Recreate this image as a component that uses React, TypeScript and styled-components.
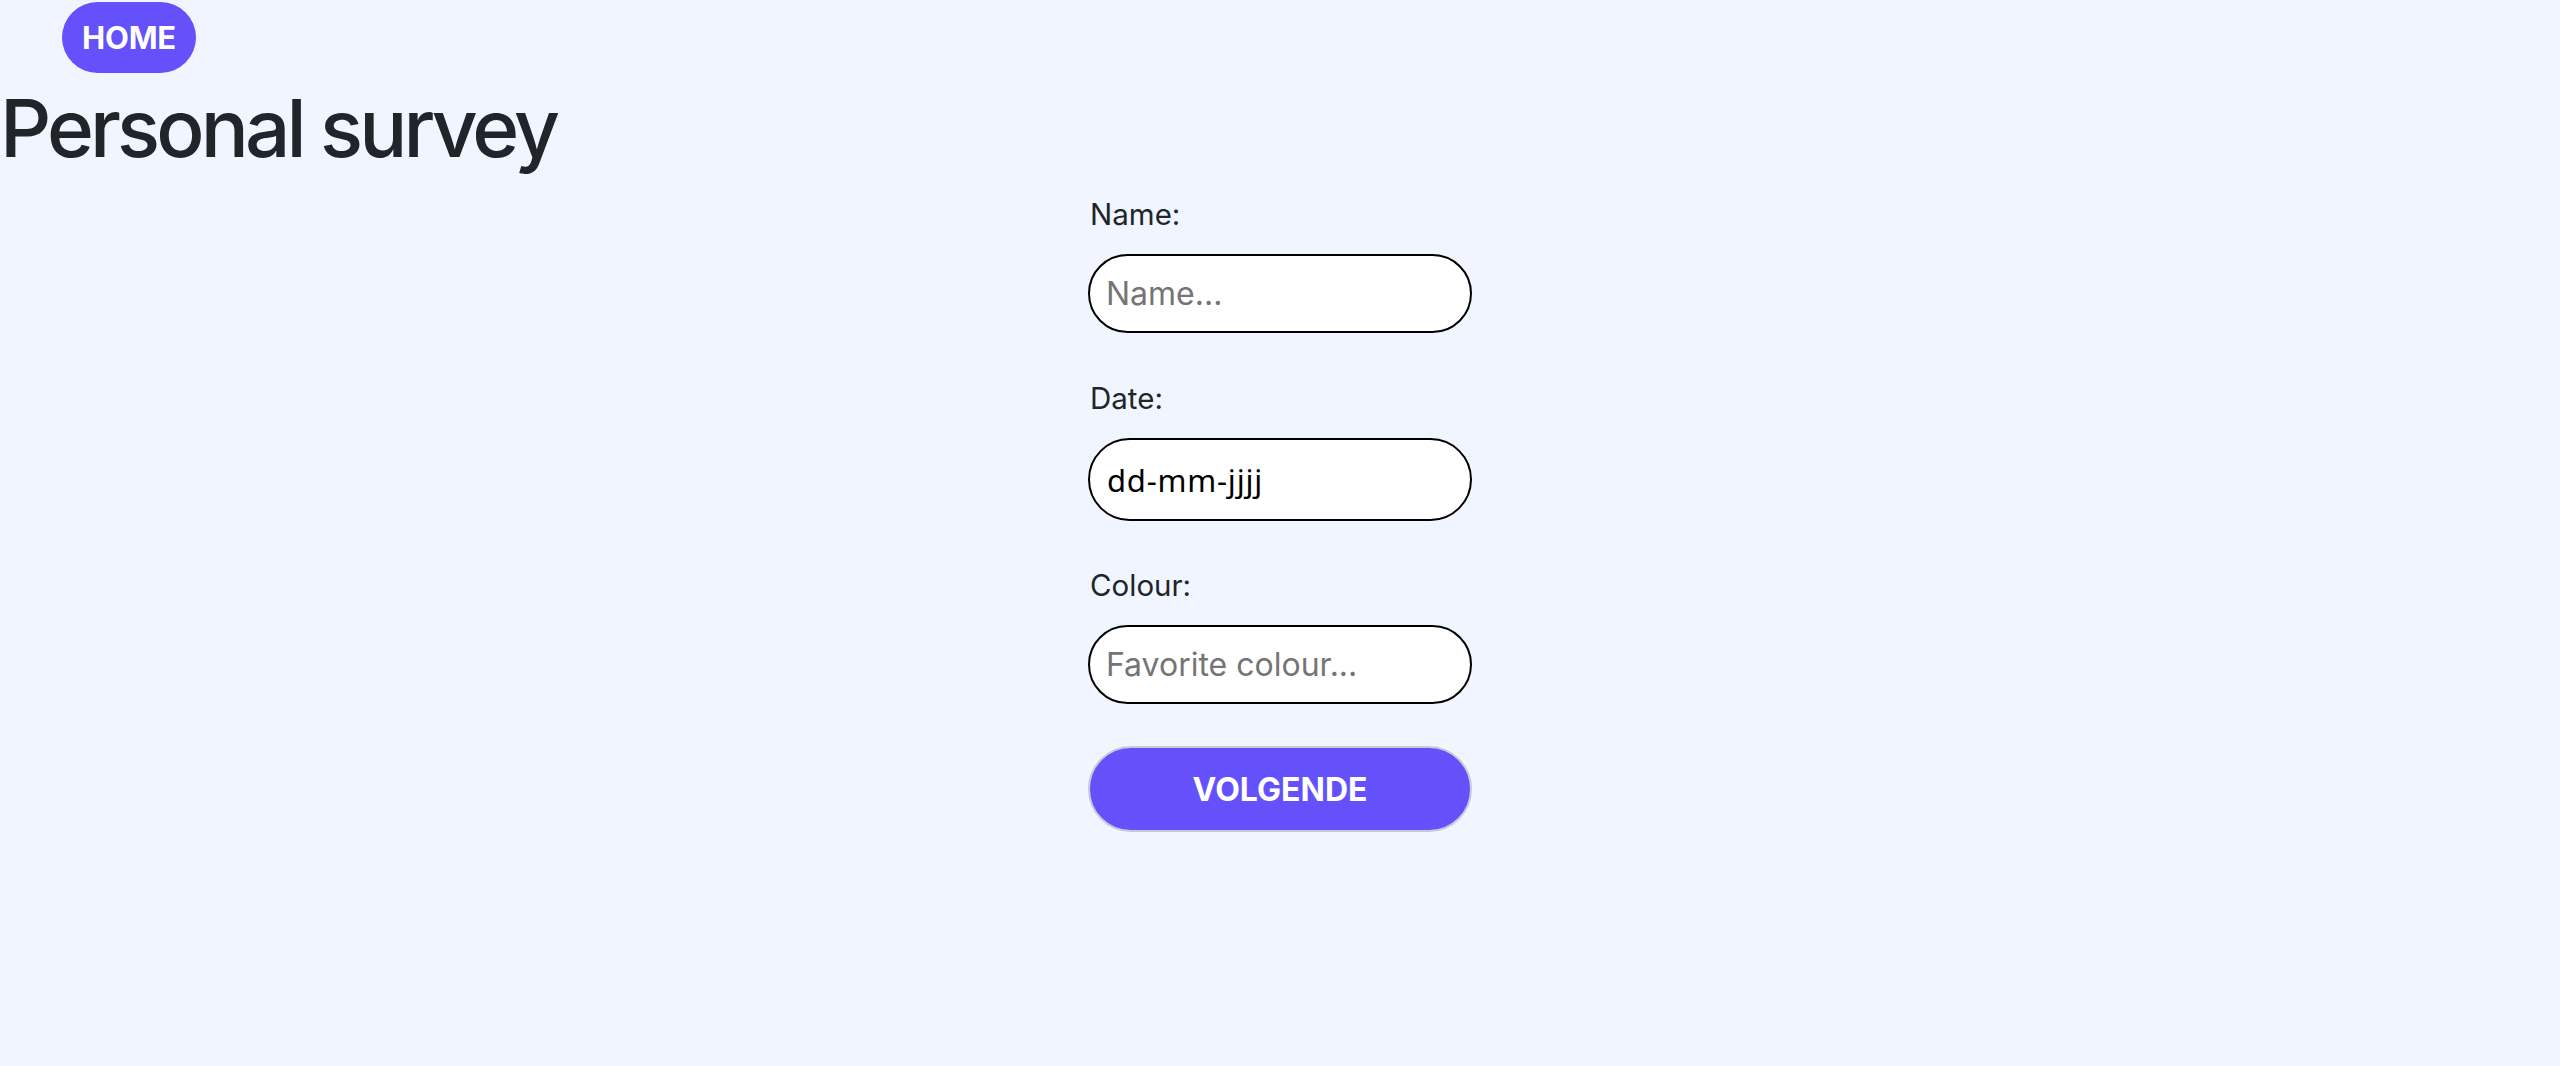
import React from "react";
import styled, { createGlobalStyle } from "styled-components";

const GlobalStyle = createGlobalStyle`
  html, body {
    margin: 0;
    padding: 0;
    background: #f0f5ff;
  }
  body {
    font-family: Inter, "Noto Sans", sans-serif;
    color: #212529;
    min-height: 100vh;
  }
  * { box-sizing: border-box; }
`;

const Page = styled.div`
  display: flex;
  flex-direction: column;
  min-height: 100vh;
`;

const Nav = styled.nav`
  display: flex;
  padding: 2px 0 0 62px;
`;

const HomeButton = styled.a`
  display: inline-flex;
  align-items: center;
  justify-content: center;
  height: 71px;
  padding: 0 20px;
  border-radius: 36px;
  background: #6451fb;
  color: #ffffff;
  font-family: Inter, sans-serif;
  font-weight: 700;
  font-size: 31px;
  text-decoration: none;
  letter-spacing: -0.2px;
`;

const Title = styled.h1`
  margin: 6px 0 0 0;
  font-family: Inter, sans-serif;
  font-weight: 500;
  font-size: 80px;
  line-height: normal;
  letter-spacing: -3.9px;
  color: #212529;
`;

const Form = styled.form`
  display: flex;
  flex-direction: column;
  align-self: center;
  width: 384px;
  margin-top: 21px;
`;

const FieldGroup = styled.div<{ $after: number }>`
  display: flex;
  flex-direction: column;
  gap: 22px;
  margin-bottom: ${(p) => p.$after}px;
`;

const Label = styled.label`
  font-family: Inter, sans-serif;
  font-size: 29.5px;
  line-height: 35px;
  color: #212529;
  padding-left: 2px;
`;

const Input = styled.input<{ $tall?: boolean; $date?: boolean }>`
  width: 100%;
  height: ${(p) => (p.$tall ? 83 : 79)}px;
  border: 2px solid #000000;
  border-radius: 45px;
  background: #ffffff;
  padding: 0 16px 0 ${(p) => (p.$date ? 17 : 16)}px;
  font-family: ${(p) => (p.$date ? '"Noto Sans", sans-serif' : "Inter, sans-serif")};
  font-size: ${(p) => (p.$date ? 31 : 32)}px;
  letter-spacing: ${(p) => (p.$date ? "0.8px" : "0")};
  color: #000000;
  outline: none;
  &::placeholder {
    color: #757575;
  }
`;

const SubmitButton = styled.button`
  width: 100%;
  height: 86px;
  border: 2px solid #c9c9d6;
  border-radius: 45px;
  background: #6451fb;
  color: #ffffff;
  font-family: Inter, sans-serif;
  font-weight: 700;
  font-size: 32px;
  cursor: pointer;
`;

export default function App() {
  return (
    <Page>
      <GlobalStyle />
      <Nav>
        <HomeButton href="#">HOME</HomeButton>
      </Nav>
      <Title>Personal survey</Title>
      <Form onSubmit={(e) => e.preventDefault()}>
        <FieldGroup $after={48}>
          <Label htmlFor="name">Name:</Label>
          <Input id="name" type="text" placeholder="Name..." />
        </FieldGroup>
        <FieldGroup $after={47}>
          <Label htmlFor="date">Date:</Label>
          <Input id="date" type="text" $tall $date defaultValue="dd-mm-jjjj" readOnly />
        </FieldGroup>
        <FieldGroup $after={42}>
          <Label htmlFor="colour">Colour:</Label>
          <Input id="colour" type="text" placeholder="Favorite colour..." />
        </FieldGroup>
        <SubmitButton type="submit">VOLGENDE</SubmitButton>
      </Form>
    </Page>
  );
}
